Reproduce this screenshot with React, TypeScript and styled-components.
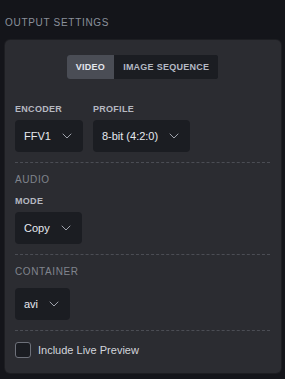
import React, { useState } from "react";
import styled, { createGlobalStyle } from "styled-components";

const Global = createGlobalStyle`
  html, body { margin: 0; padding: 0; background: #14151a; }
  body { font-family: "Liberation Sans", Arial, sans-serif; }
  * { box-sizing: border-box; }
`;

const Page = styled.div`
  width: 285px;
  min-height: 379px;
  padding: 17px 4px 0 5px;
  background: #14151a;
`;

const Title = styled.div`
  font-size: 10px;
  line-height: 12px;
  letter-spacing: 0.7px;
  color: #8a909b;
  text-transform: uppercase;
  margin-bottom: 11px;
`;

const Panel = styled.div`
  background: #2b2c31;
  border-radius: 5px;
  box-shadow: 0 0 0 1px #1d1e22;
  padding: 15px 11px 15px 10px;
  display: flex;
  flex-direction: column;
`;

const Tabs = styled.div`
  align-self: center;
  display: flex;
  height: 24px;
  border-radius: 3px;
  overflow: hidden;
  background: #1b1d22;
  margin-bottom: 25px;
`;

const Tab = styled.button<{ $active?: boolean }>`
  border: 0;
  margin: 0;
  padding: 0 9px;
  height: 24px;
  font-family: "Liberation Sans", Arial, sans-serif;
  font-size: 9px;
  font-weight: 700;
  letter-spacing: 0.25px;
  text-transform: uppercase;
  background: ${(p) => (p.$active ? "#4a4d55" : "#1b1d22")};
  color: ${(p) => (p.$active ? "#e4e7ee" : "#b4b9c4")};
  cursor: pointer;
`;

const Row = styled.div`
  display: flex;
  gap: 10px;
`;

const Field = styled.div`
  display: flex;
  flex-direction: column;
  gap: 5px;
`;

const Label = styled.div`
  font-size: 9px;
  line-height: 11px;
  font-weight: 700;
  letter-spacing: 0.3px;
  color: #b6b9c1;
  text-transform: uppercase;
`;

const Select = styled.div`
  display: inline-flex;
  align-items: center;
  align-self: flex-start;
  gap: 8px;
  height: 32px;
  padding: 0 8px 0 9px;
  border-radius: 4px;
  background: #1b1d22;
  color: #e6e9f0;
  font-size: 11px;
  white-space: nowrap;
  svg { display: block; flex: none; }
`;

const Divider = styled.div`
  border-top: 1px dashed #4b4d54;
  margin: 10px 0;
`;

const Section = styled.div`
  font-size: 10px;
  line-height: 12px;
  letter-spacing: 0.6px;
  color: #80848d;
  text-transform: uppercase;
  margin: 1px 0 10px;
`;

const CheckRow = styled.label`
  display: flex;
  align-items: center;
  gap: 7px;
  margin-top: 1px;
  font-size: 11px;
  color: #d2d5dc;
  cursor: pointer;
`;

const Box = styled.span`
  width: 16px;
  height: 16px;
  border-radius: 3px;
  border: 1px solid #6e717a;
  background: #1b1d22;
  flex: none;
`;

const Chevron = () => (
  <svg width="16" height="16" viewBox="0 0 24 24" fill="none" stroke="#9ea2ab" strokeWidth="1.5" strokeLinecap="round" strokeLinejoin="round">
    <path d="m6 9 6 6 6-6" />
  </svg>
);

const Dropdown = ({ value }: { value: string }) => (
  <Select>
    <span>{value}</span>
    <Chevron />
  </Select>
);

export default function App() {
  const [tab, setTab] = useState("video");
  return (
    <Page>
      <Global />
      <Title>Output Settings</Title>
      <Panel>
        <Tabs>
          <Tab $active={tab === "video"} onClick={() => setTab("video")}>Video</Tab>
          <Tab $active={tab === "seq"} onClick={() => setTab("seq")}>Image Sequence</Tab>
        </Tabs>
        <Row>
          <Field>
            <Label>Encoder</Label>
            <Dropdown value="FFV1" />
          </Field>
          <Field>
            <Label>Profile</Label>
            <Dropdown value="8-bit (4:2:0)" />
          </Field>
        </Row>
        <Divider />
        <Section>Audio</Section>
        <Field>
          <Label>Mode</Label>
          <Dropdown value="Copy" />
        </Field>
        <Divider />
        <Section>Container</Section>
        <Dropdown value="avi" />
        <Divider />
        <CheckRow>
          <Box />
          Include Live Preview
        </CheckRow>
      </Panel>
    </Page>
  );
}
